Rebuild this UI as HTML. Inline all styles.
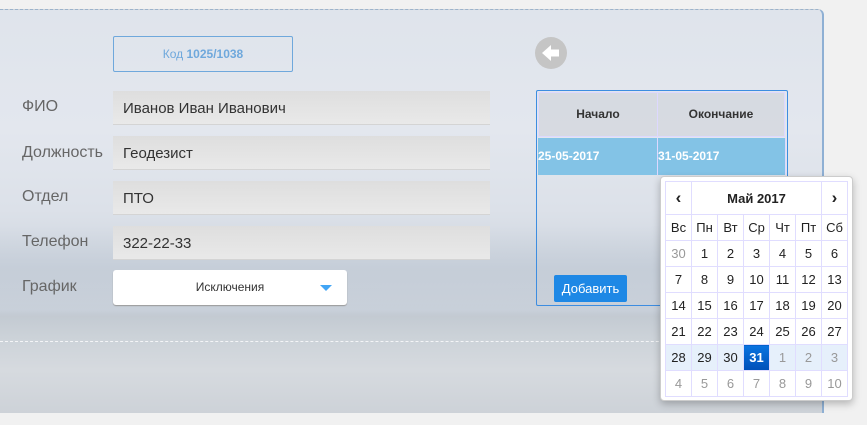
<!DOCTYPE html>
<html><head><meta charset="utf-8"><style>
*{box-sizing:border-box;margin:0;padding:0}
body{width:867px;height:425px;background:#f1f1f1;font-family:"Liberation Sans",sans-serif;position:relative;overflow:hidden}
.panel{position:absolute;left:0;top:9px;width:824px;height:404px;border-top:1px dashed #9bb3cc;border-right:2px solid #8fb0d4;border-radius:0 6px 0 0;overflow:hidden;
background:linear-gradient(180deg,#dfe4ec 0px,#e3e7ee 120px,#dce1e9 200px,#d0d7e0 250px,#ccd3dc 300px,#c3cad2 306px,#cdd3d9 330px,#d6dadf 360px,#cdd2d8 404px)}
.mtn{position:absolute;left:0;top:215px;width:824px;height:90px;background:linear-gradient(180deg,rgba(180,192,208,0) 0,rgba(175,186,200,.3) 50%,rgba(190,198,210,.2) 100%)}
.dash{position:absolute;left:0;top:331px;width:824px;border-top:1px dashed #f4f5f7}
.lbl{position:absolute;left:22px;font-size:16px;color:#666}
.inp{position:absolute;left:113px;width:377px;height:34px;background:linear-gradient(#dedede,#e9e9e9);border-bottom:1px solid #d4d4d4;font-size:15px;color:#333;padding:9px 10px}
.code{position:absolute;left:113px;top:36px;width:180px;height:36px;border:1px solid #6fa8dc;border-radius:2px;color:#6fa8dc;font-size:12px;text-align:center;line-height:34px}
.sel{position:absolute;left:113px;top:270px;width:234px;height:35px;background:#fff;border-radius:3px;box-shadow:0 1px 1px #999;font-size:12px;text-align:center;line-height:35px;color:#333}
.tri{position:absolute;right:15px;top:15px;border-left:6px solid transparent;border-right:6px solid transparent;border-top:6px solid #42a5f5}
.back{position:absolute;left:535px;top:37px;width:32px;height:32px;border-radius:50%;background:#c5c5c5}
.tbl{position:absolute;left:536px;top:90px;width:252px;height:216px;border:1px solid #3d8de0;border-radius:2px}
.th{position:absolute;top:1px;height:45px;background:rgba(210,212,220,.7);border:1px solid #ddd8ff;font-size:12px;font-weight:bold;color:#333;text-align:center;line-height:43px}
.td{position:absolute;top:47px;height:37px;background:#83c3e6;color:#fff;font-size:12px;font-weight:bold;line-height:37px;border-right:1px solid #ddd8ff}
.add{position:absolute;left:17px;top:184px;width:73px;height:27px;background:#1e88e5;border-radius:2px;color:#fff;font-size:13px;text-align:center;line-height:27px}
.cal{position:absolute;left:660px;top:176px;width:193px;height:225px;background:#fff;border:1px solid #ccc;border-radius:4px;box-shadow:0 3px 8px rgba(0,0,0,.25)}
.cal table{position:absolute;left:4px;top:4px;border-collapse:collapse}
.cal td{border:1px solid #e0ddff;width:26px;height:26px;text-align:center;font-size:13px;color:#222;padding:0}
.cal .h td{height:33px;font-weight:bold;font-size:13px}
.cal .h td.ar{font-size:17px}
.o{color:#999!important}
.w td{background:#e6f0fb}
.s{background:linear-gradient(#0a74e0,#0050b8)!important;color:#fff!important;font-weight:bold}
</style></head><body>
<div class="panel"><div class="mtn"></div><div class="dash"></div></div>
<div class="code">Код <b>1025/1038</b></div>
<div class="lbl" style="top:98px">ФИО</div>
<div class="lbl" style="top:144px">Должность</div>
<div class="lbl" style="top:188px">Отдел</div>
<div class="lbl" style="top:233px">Телефон</div>
<div class="lbl" style="top:278px">График</div>
<div class="inp" style="top:91px">Иванов Иван Иванович</div>
<div class="inp" style="top:136px">Геодезист</div>
<div class="inp" style="top:181px">ПТО</div>
<div class="inp" style="top:226px">322-22-33</div>
<div class="sel">Исключения<div class="tri"></div></div>
<div class="back"><svg width="32" height="32" viewBox="0 0 32 32"><path d="M7 16 L16 8 V12.5 H24 V19.5 H16 V24 Z" fill="#fff"/></svg></div>
<div class="tbl">
<div class="th" style="left:1px;width:120px">Начало</div>
<div class="th" style="left:120px;width:128px">Окончание</div>
<div class="td" style="left:1px;width:120px">25-05-2017</div>
<div class="td" style="left:121px;width:128px">31-05-2017</div>
<div class="add">Добавить</div>
</div>
<div class="cal"><table>
<tr class="h"><td class="ar">‹</td><td colspan="5">Май 2017</td><td class="ar">›</td></tr>
<tr><td>Вс</td><td>Пн</td><td>Вт</td><td>Ср</td><td>Чт</td><td>Пт</td><td>Сб</td></tr>
<tr><td class="o">30</td><td>1</td><td>2</td><td>3</td><td>4</td><td>5</td><td>6</td></tr>
<tr><td>7</td><td>8</td><td>9</td><td>10</td><td>11</td><td>12</td><td>13</td></tr>
<tr><td>14</td><td>15</td><td>16</td><td>17</td><td>18</td><td>19</td><td>20</td></tr>
<tr><td>21</td><td>22</td><td>23</td><td>24</td><td>25</td><td>26</td><td>27</td></tr>
<tr class="w"><td>28</td><td>29</td><td>30</td><td class="s">31</td><td class="o">1</td><td class="o">2</td><td class="o">3</td></tr>
<tr><td class="o">4</td><td class="o">5</td><td class="o">6</td><td class="o">7</td><td class="o">8</td><td class="o">9</td><td class="o">10</td></tr>
</table></div>
</body></html>
